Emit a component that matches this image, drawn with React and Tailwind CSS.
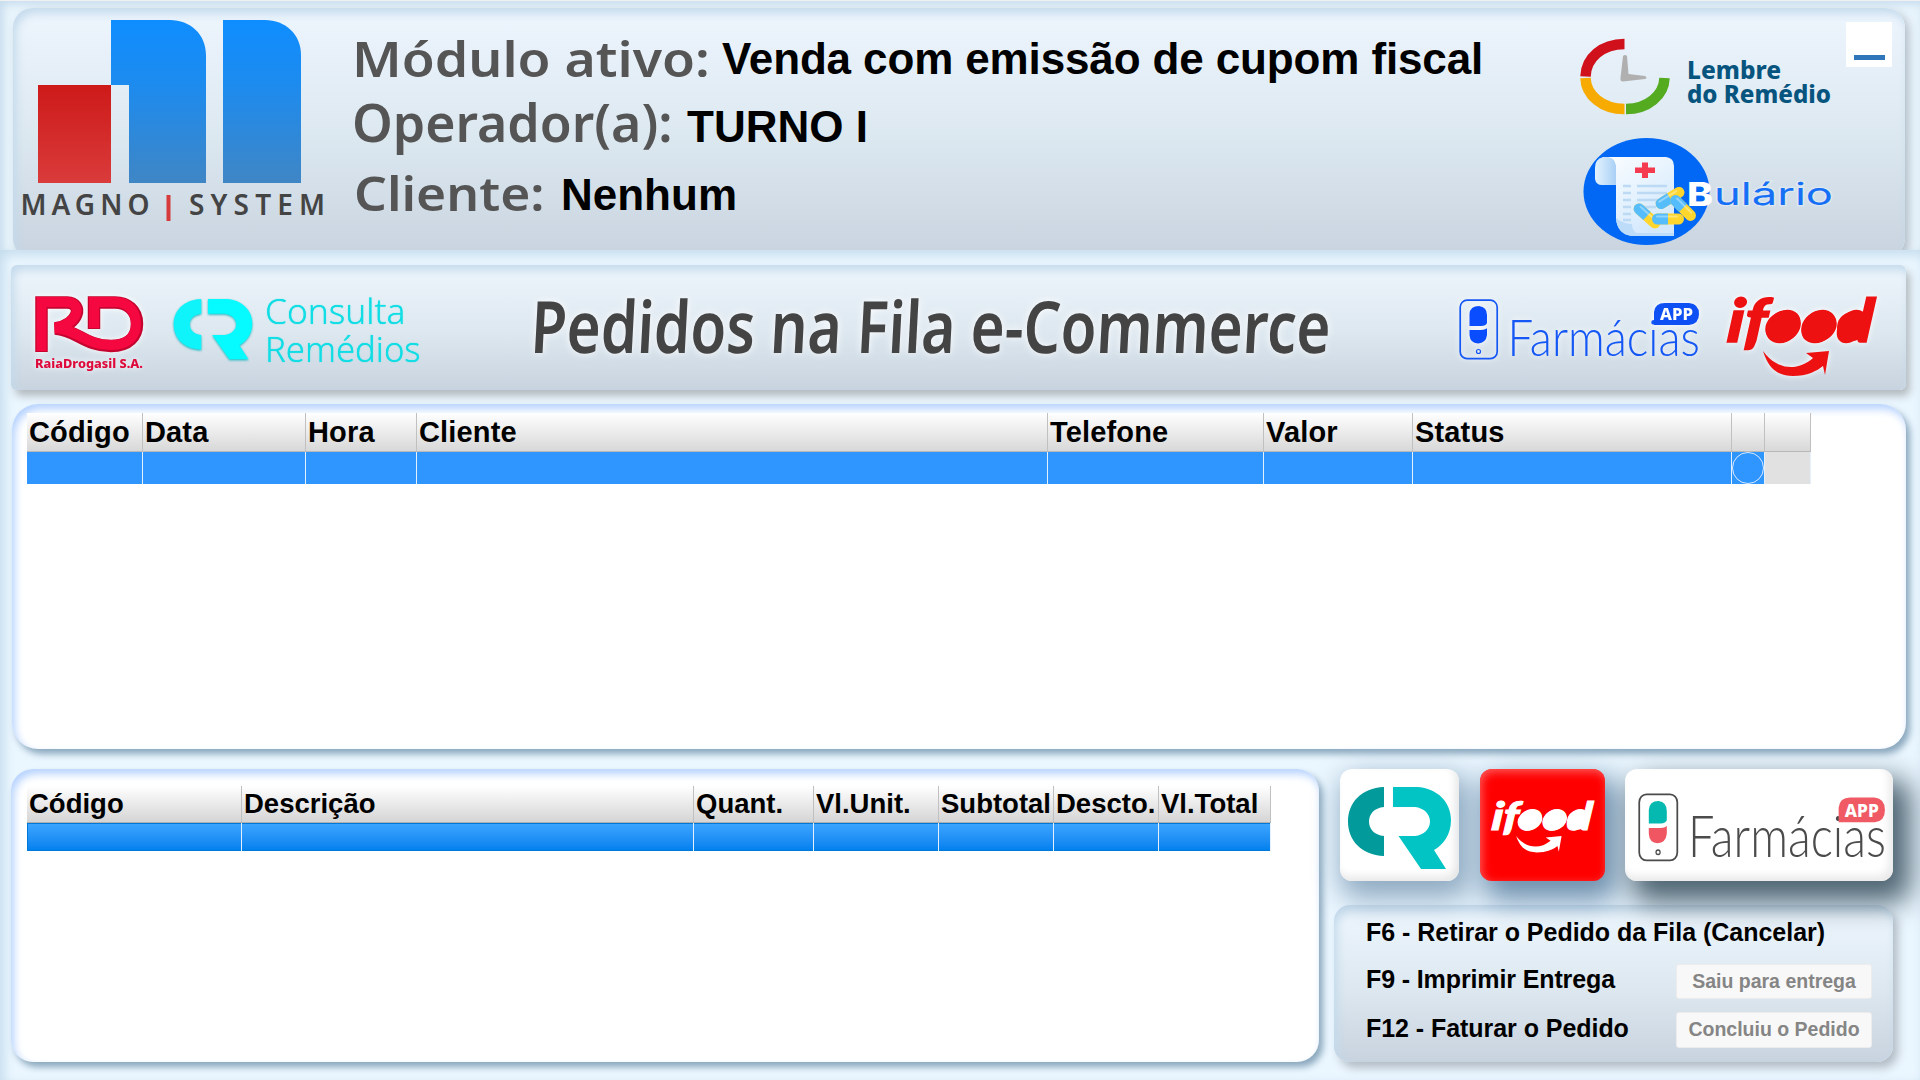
import { useLayoutEffect, useRef, useState } from "react";

const PEDIDOS = [
  { label: "Código", width: "w-[116px]" },
  { label: "Data", width: "w-[163px]" },
  { label: "Hora", width: "w-[111px]" },
  { label: "Cliente", width: "w-[631px]" },
  { label: "Telefone", width: "w-[216px]" },
  { label: "Valor", width: "w-[149px]" },
  { label: "Status", width: "w-[319px]" },
  { label: "", width: "w-[33px]", marcador: true },
  { label: "", width: "w-[46px]", vazio: true },
];

const ITENS = [
  { label: "Código", width: "w-[215px]" },
  { label: "Descrição", width: "w-[452px]" },
  { label: "Quant.", width: "w-[120px]" },
  { label: "Vl.Unit.", width: "w-[125px]" },
  { label: "Subtotal", width: "w-[115px]" },
  { label: "Descto.", width: "w-[105px]" },
  { label: "Vl.Total", width: "w-[112px]" },
];

// Estica ou comprime o texto para ocupar a largura do container
const FitText = ({ className, children }) => {
  const box = useRef(null);
  const text = useRef(null);
  const [scale, setScale] = useState(1);

  useLayoutEffect(() => {
    setScale(box.current.clientWidth / text.current.offsetWidth);
  }, []);

  return (
    <div ref={box} className={`whitespace-nowrap ${className}`}>
      <span ref={text} className="inline-block origin-left" style={{ transform: `scaleX(${scale})` }}>
        {children}
      </span>
    </div>
  );
};

const MagnoLogo = () => (
  <svg width="310" height="210" viewBox="18 14 310 210" className="shrink-0">
    <defs>
      <linearGradient id="azul" x1="0" y1="20" x2="0" y2="183" gradientUnits="userSpaceOnUse">
        <stop offset="0" stopColor="#0f8dff" />
        <stop offset="0.4" stopColor="#1d8bee" />
        <stop offset="1" stopColor="#3f86c5" />
      </linearGradient>
      <linearGradient id="vermelho" x1="0" y1="0" x2="0" y2="1">
        <stop offset="0" stopColor="#cd1a19" />
        <stop offset="1" stopColor="#da3b3b" />
      </linearGradient>
    </defs>
    <rect x="38" y="85" width="73" height="98" fill="url(#vermelho)" />
    <path d="M111 20H170C190 20 206 34 206 55V183H129V85H111Z" fill="url(#azul)" />
    <path d="M223 20H265C285 20 301 34 301 55V183H223Z" fill="url(#azul)" />
    <g fontFamily="'Noto Sans', sans-serif" fontWeight="600" fontSize="28" fill="#444">
      <text x="20.500" y="215" textLength="129" lengthAdjust="spacing">MAGNO</text>
      <text x="189" y="215" textLength="136" lengthAdjust="spacing">SYSTEM</text>
    </g>
    <rect x="166.500" y="195" width="4" height="26" fill="#d63a3a" />
  </svg>
);

const LembreLogo = () => (
  <svg width="256" height="80" viewBox="1578 37 256 80">
    <g fill="none" strokeWidth="10.500">
      <path d="M1585.500 76.500C1586 58 1602 44 1624.500 44" stroke="#d0101b" />
      <path d="M1585.500 78C1586 95 1602 109 1624.500 109" stroke="#f7ab00" />
      <path d="M1626 109C1648 109 1664 95 1664.500 78" stroke="#54ab20" />
    </g>
    <path d="M1623 56Q1625 54 1627 56L1628.500 74L1645 76Q1648 78 1645 79L1623 81.500Q1620 81.500 1620.500 78Z" fill="#b0b0b0" />
    <g fontFamily="'Noto Sans', sans-serif" fontWeight="800" fontSize="24" fill="#07557f">
      <text x="1687" y="78.500" textLength="94" lengthAdjust="spacingAndGlyphs">Lembre</text>
      <text x="1687" y="102.500" textLength="144" lengthAdjust="spacingAndGlyphs">do Remédio</text>
    </g>
  </svg>
);

const Pilula = ({ transform }) => (
  <g transform={transform}>
    <rect x="-16" y="-5.500" width="32" height="11" rx="5.500" fill="#ffd62e" />
    <path d="M0 -5.500H-10.500A5.500 5.500 0 0 0 -10.500 5.500H0Z" fill="#55bdfb" />
    <rect x="-12" y="-3.500" width="22" height="2" rx="1" fill="#fff" opacity="0.35" />
  </g>
);

const BularioLogo = () => (
  <svg width="252" height="110" viewBox="1578 137 252 110" className="overflow-visible">
    <defs>
      <linearGradient id="papel" x1="0" y1="0" x2="0.6" y2="1">
        <stop offset="0" stopColor="#fbfeff" />
        <stop offset="1" stopColor="#d3e8fd" />
      </linearGradient>
      <linearGradient id="rolo" x1="0" y1="0" x2="1" y2="0">
        <stop offset="0" stopColor="#e4f3ff" />
        <stop offset="1" stopColor="#a9d0f5" />
      </linearGradient>
    </defs>
    <ellipse cx="1646.500" cy="191.500" rx="63" ry="53.500" fill="#0068f5" />
    <path d="M1603 157H1666Q1674 158 1674 166V236H1632Q1617 234 1616 218V166Z" fill="url(#papel)" />
    <path d="M1603 157Q1595 159 1595 168V179Q1596 185 1602 185H1616V166Q1615 158 1608 157Z" fill="url(#rolo)" />
    <path d="M1616 218Q1617 234 1632 236H1674V233H1636Q1632 230 1632 224Q1624 224 1616 218Z" fill="#bcdcfa" />
    <path d="M1642 162.500H1648V167.500H1655V173H1648V178H1642V173H1635V167.500H1642Z" fill="#f43b50" />
    <g stroke="#bcdaf4" strokeWidth="2.400">
      <path d="M1623 186H1631M1637 186H1667M1623 193H1631M1637 193H1667M1623 200H1631M1637 200H1662M1623 207H1631M1637 207H1656M1623 214H1631M1623 220H1631" />
    </g>
    <Pilula transform="translate(1670 198) rotate(-32)" />
    <Pilula transform="translate(1683 208) rotate(45)" />
    <Pilula transform="translate(1647 216) rotate(42)" />
    <Pilula transform="translate(1668 219)" />
    <g fontFamily="Inter, sans-serif">
      <text x="1687" y="206" fontSize="32" fontWeight="800" fill="#fff" textLength="26" lengthAdjust="spacingAndGlyphs">B</text>
      <text x="1714" y="205" fontSize="31" fontWeight="400" fill="#1670f6" stroke="#fff" strokeOpacity="0.3" strokeWidth="2.500" paintOrder="stroke" textLength="119" lengthAdjust="spacingAndGlyphs">ulário</text>
    </g>
  </svg>
);

const RaiaLogo = () => (
  <svg width="114" height="82" viewBox="-3 -3 114 82" className="drop-shadow-[0_0_3px_#fff]">
    <path
      d="M6.500 56V6.500H32C49 7 44 29 20 32.500C42 34 50 50 76 50C94 50 102 40 102 28C102 14 92 6.500 80 6.500H59V33"
      fill="none"
      stroke="#c5052f"
      strokeWidth="12.500"
    />
    <path
      d="M6.500 55V6H32C48 7 44 28 20 32C42 33 50 49 76 49C93 49 101 40 101 28C101 14 92 6 80 6H59V32"
      fill="none"
      stroke="#f5073f"
      strokeWidth="10"
    />
    <text x="0" y="72" fontFamily="'Noto Sans', sans-serif" fontWeight="800" fontSize="13" fill="#de0a3c" textLength="108" lengthAdjust="spacingAndGlyphs">
      RaiaDrogasil S.A.
    </text>
  </svg>
);

const ConsultaSymbol = ({ className, left, right }) => (
  <svg viewBox="0 0 105 83" preserveAspectRatio="none" className={className}>
    <path d="M37 0C14 1 1 16 1 34.500S14 68 37 69V49C27 48 22 42 22 34.500S27 21 37 20Z" fill={left} />
    <path d="M46 0H70C91 1 104 16 104 33C104 48 96 58 87 63L99 82H74L51.500 49H68C77 48 83 42 83 34.500S77 21 68 20H46Z" fill={right} />
  </svg>
);

const IfoodMark = ({ className, fill }) => (
  <svg viewBox="-2 -2 154 86" preserveAspectRatio="none" className={className}>
    <g transform="skewX(-5)">
      <text x="3" y="45.500" fontFamily="Lato, sans-serif" fontWeight="900" fontStyle="italic" fontSize="60" fill={fill} stroke={fill} strokeWidth="1.500" textLength="146" lengthAdjust="spacingAndGlyphs">
        ifood
      </text>
    </g>
    <ellipse cx="56" cy="30.500" rx="18.500" ry="15" fill={fill} transform="rotate(-28 56 30.500)" />
    <ellipse cx="92" cy="30.500" rx="18.500" ry="15" fill={fill} transform="rotate(-28 92 30.500)" />
    <ellipse cx="125" cy="30.500" rx="15" ry="14.500" fill={fill} transform="rotate(-28 125 30.500)" />
    <path d="M36 55C42 74 52 80 66 80C80 80 90 75 96 70L98 79L102 55L79 57L86 62C70 76 50 74 36 55Z" fill={fill} />
  </svg>
);

const FarmaciasLogo = ({ className, line, top, bottom, badge }) => (
  <svg viewBox="0 0 242 62" preserveAspectRatio="none" className={className}>
    <rect x="1.200" y="1.200" width="37" height="58.500" rx="7" fill="none" stroke={line} strokeWidth="1.700" />
    <path d="M10.500 27V15Q11 7 20 7Q28 8 28 16V24Q27 27 22 27Z" fill={top} />
    <path d="M10.500 31H22Q27 30.500 28 29V36Q27 44 19 44.500Q11 44 10.500 36Z" fill={bottom} />
    <circle cx="19.500" cy="52.500" r="2" fill="none" stroke={line} strokeWidth="1.200" />
    <text x="48.500" y="56.500" fontFamily="Lato, sans-serif" fontWeight="300" fontSize="51" fill={line} textLength="192.500" lengthAdjust="spacingAndGlyphs">
      Farmácias
    </text>
    <path d="M195 26V13Q196 4 206 4H230Q240 5 240 15Q240 25 230 26Z" fill={badge} />
    <text x="201" y="21" fontFamily="'Noto Sans', sans-serif" fontWeight="800" fontSize="16" fill="#fff" textLength="33" lengthAdjust="spacingAndGlyphs">
      APP
    </text>
  </svg>
);

const PedidosTable = () => (
  <div className="w-[1784px]">
    <div className="flex h-[39px] border-b border-[#b9b9b9] bg-linear-to-b from-white to-[#d8d8d8]">
      {PEDIDOS.map((c, i) => (
        <div key={i} className={`shrink-0 border-r border-[#c0c0c0] pl-[2px] text-[29px] leading-[38px] font-bold tracking-[0.15px] ${c.width}`}>
          {c.label}
        </div>
      ))}
    </div>
    <div className="flex h-8">
      {PEDIDOS.map((c, i) => (
        <div key={i} className={`shrink-0 border-r border-[#e4f0fc] ${c.vazio ? "bg-[#e1e1e1]" : "bg-[#3096ff]"} ${c.width}`}>
          {c.marcador && <div className="size-8 rounded-full border border-[#d8eaff]" />}
        </div>
      ))}
    </div>
  </div>
);

const ItensTable = () => (
  <div className="w-[1244px]">
    <div className="flex h-[37px] border-b border-[#b0b0b0] bg-linear-to-b from-white to-[#d5d5d5]">
      {ITENS.map((c) => (
        <div key={c.label} className={`shrink-0 border-r border-[#c0c0c0] pl-[2px] text-[27.5px] leading-[35px] font-bold whitespace-nowrap ${c.width}`}>
          {c.label}
        </div>
      ))}
    </div>
    <div className="flex h-7 border-y border-l border-[#0078d7] bg-linear-to-b from-[#3aa4ff] to-[#0081ee]">
      {ITENS.map((c) => (
        <div key={c.label} className={`-my-px shrink-0 border-r border-[#e4f0fc] first:-ml-px ${c.width}`} />
      ))}
    </div>
  </div>
);

const Header = () => (
  <header className="h-[250px] overflow-hidden border-t border-[#f0f0f0] bg-[#e8f4fb] pt-[7px] pl-[13px] shadow-[inset_3px_3px_8px_#c5dbed]">
    <div className="flex h-[250px] w-[1892px] rounded-[20px] bg-linear-to-b from-[#ecf4fc] from-5% via-[#dce8f0] via-52% to-[#c8d3df] shadow-[inset_3px_5px_10px_#c3daec,4px_4px_8px_#b4bfc9]">
      <div className="pt-[6px] pl-[5px]">
        <MagnoLogo />
      </div>
      <div className="flex-1 pt-[17px] pl-[24px]">
        <div className="flex h-[68px]">
          <FitText className="w-[358px] font-['Noto_Sans'] text-[48px] leading-[67px] font-semibold text-[#555]">Módulo ativo:</FitText>
          <span className="ml-[12px] text-[44px] leading-[68px] font-bold tracking-[-0.13px]">Venda com emissão de cupom fiscal</span>
        </div>
        <div className="flex h-[68px]">
          <FitText className="w-[321px] font-['Noto_Sans'] text-[52px] leading-[58px] font-semibold text-[#555]">Operador(a):</FitText>
          <span className="ml-[14px] text-[44px] leading-[68px] font-bold">TURNO I</span>
        </div>
        <div className="flex h-[68px]">
          <FitText className="ml-[2px] w-[191px] font-['Noto_Sans'] text-[47px] leading-[65px] font-semibold text-[#555]">Cliente:</FitText>
          <span className="ml-[16px] text-[44px] leading-[67px] font-bold">Nenhum</span>
        </div>
      </div>
      <div className="flex w-[256px] flex-col gap-5 pt-[29px]">
        <LembreLogo />
        <BularioLogo />
      </div>
      <button className="mt-[14px] mr-[13px] ml-[12px] flex h-[45px] w-[46px] items-end justify-center bg-white pb-[7px]">
        <span className="h-[5px] w-[31px] bg-[#2e75b9]" />
      </button>
    </div>
  </header>
);

const Banner = () => (
  <div className="flex h-[125px] w-[1895px] rounded-[6px] bg-linear-to-b from-[#ebf3fa] from-10% via-[#dce7ef] via-55% to-[#c8d3df] shadow-[inset_3px_5px_10px_#c3daec,4px_6px_8px_#b3babf]">
    <div className="pt-[28px] pl-[21px]">
      <RaiaLogo />
    </div>
    <ConsultaSymbol left="#0ff4fb" right="#05fbff" className="mt-[34px] ml-[27px] h-[61px] w-[80px] drop-shadow-[0_1px_1px_#19b5bd]" />
    <div className="mt-[27px] ml-[12px] w-[156px] font-['Noto_Sans'] font-light text-[#10dde4] [text-shadow:0_0_1px_#10dde4]">
      <FitText className="w-[140px] text-[34px] leading-[38px]">Consulta</FitText>
      <FitText className="w-[156px] text-[34px] leading-[38px]">Remédios</FitText>
    </div>
    <div className="ml-[110px] -skew-x-[3deg] pt-[4px]">
      <FitText className="w-[800px] font-['Noto_Sans'] text-[72px] leading-[112px] font-semibold text-[#444] [text-shadow:0_0_10px_#fff]">
        Pedidos na Fila e-Commerce
      </FitText>
    </div>
    <FarmaciasLogo line="#1457f5" top="#0a4dff" bottom="#0a4dff" badge="#0f50f5" className="mt-[34px] ml-[128px] h-[62px] w-[242px] shrink-0 drop-shadow-[0_0_3px_#fff]" />
    <IfoodMark fill="#ee1111" className="mt-[29px] ml-[24px] h-[86px] w-[154px] shrink-0 drop-shadow-[0_0_3px_#fff]" />
  </div>
);

const Atalhos = () => (
  <div className="mt-6 -ml-[6px] flex h-[157px] w-[559px] flex-col rounded-[16px] bg-linear-to-b from-[#ebf4fb] from-10% via-[#dce7ef] via-55% to-[#c8d3df] pl-[32px] text-[25px] font-bold shadow-[inset_3px_5px_10px_#c3daec,5px_6px_10px_#b3bcc6]">
    <div className="h-[59px] leading-[54px] tracking-[-0.02px]">F6 - Retirar o Pedido da Fila (Cancelar)</div>
    <div className="flex h-[48px] justify-between pr-[21px]">
      <span className="leading-[30px] tracking-[-0.12px]">F9 - Imprimir Entrega</span>
      <button className="h-[35px] w-[196px] rounded-[3px] border border-[#ececec] bg-[#f8f8f8] text-[19.5px] text-[#858585]">Saiu para entrega</button>
    </div>
    <div className="flex h-[48px] justify-between pr-[21px]">
      <span className="leading-[32px] tracking-[-0.05px]">F12 - Faturar o Pedido</span>
      <button className="h-[36px] w-[196px] rounded-[3px] border border-[#ececec] bg-[#f8f8f8] text-[19.5px] text-[#858585]">Concluiu o Pedido</button>
    </div>
  </div>
);

const App = () => (
  <div className="h-[1080px] w-[1920px] overflow-hidden bg-[#ebf7ff] font-['Liberation_Sans',Arial,sans-serif] text-black">
    <Header />

    <main className="h-[830px] bg-[#ebf7ff] pt-[15px] pl-[11px] shadow-[inset_4px_5px_12px_#c5dced]">
      <Banner />

      {/* Pedidos na fila */}
      <section className="mt-[14px] ml-px h-[345px] w-[1894px] rounded-[26px] bg-white pt-[9px] pl-[15px] shadow-[inset_3px_5px_8px_#b5d2ff,4px_5px_7px_#8aa7bd]">
        <PedidosTable />
      </section>

      <div className="mt-5 flex">
        {/* Itens do pedido selecionado */}
        <section className="h-[293px] w-[1308px] rounded-[22px] bg-white pt-[17px] pl-[16px] shadow-[inset_3px_5px_8px_#b5d2ff,4px_5px_7px_#8aa7bd]">
          <ItensTable />
        </section>

        <aside className="ml-[21px]">
          <div className="flex h-[112px]">
            <button className="w-[119px] rounded-[12px] bg-white pl-[7px] shadow-[inset_-4px_-5px_8px_#e9e9e9,6px_12px_28px_6px_#8faac2]">
              <ConsultaSymbol left="#029a9b" right="#02c4c5" className="mt-[6px] h-[83px] w-[105px]" />
            </button>
            <button className="ml-[21px] w-[125px] rounded-[12px] bg-[#fe0000] pl-[10px] shadow-[inset_2px_3px_10px_#ff5a5a,8px_14px_28px_6px_#6f90ae]">
              <IfoodMark fill="#ffffff" className="mt-[4px] h-[56px] w-[106px]" />
            </button>
            <button className="ml-5 w-[268px] rounded-[12px] bg-white pl-[13px] shadow-[inset_-4px_-5px_8px_#e9e9e9,12px_16px_28px_6px_#4f6573]">
              <FarmaciasLogo line="#4b4b4b" top="#05b8b0" bottom="#ef5661" badge="#f05a64" className="mt-[6px] h-[70px] w-[249px]" />
            </button>
          </div>
          <Atalhos />
        </aside>
      </div>
    </main>
  </div>
);

export default App;
